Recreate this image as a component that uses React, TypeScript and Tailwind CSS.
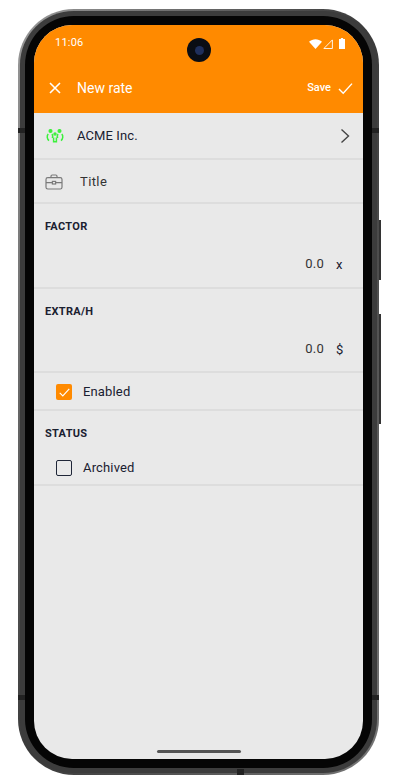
import React from 'react';

const font = { fontFamily: 'Roboto, sans-serif' };

const CloseIcon = () => (
  <svg width={14} height={14} viewBox="0 0 14 14" fill="none">
    <path d="M2 2l10 10M12 2L2 12" stroke="#fff" strokeWidth={1.6} />
  </svg>
);

const CheckIcon = ({ w = 15, sw = 1.4 }: { w?: number; sw?: number }) => (
  <svg width={w} height={w} viewBox="0 0 15 15" fill="none">
    <path d="M1 8l4.2 4.2L14 2.6" stroke="#fff" strokeWidth={sw} />
  </svg>
);

const PeopleIcon = () => (
  <svg width={18} height={14} viewBox="0 0 18 14" fill="none" stroke="#3cf03c" strokeWidth={1.5}>
    <circle cx={4.5} cy={2} r={1.3} fill="#3cf03c" />
    <circle cx={13.5} cy={2} r={1.3} fill="#3cf03c" />
    <circle cx={9} cy={5} r={1} />
    <path d="M2.2 5c-1.6 2-1.2 5 .8 6.6M6 5c1 1.4.9 2.6.3 4M15.8 5c1.6 2 1.2 5-.8 6.6M12 5c-1 1.4-.9 2.6-.3 4M7.6 8.4v4.4h2.8V8.4" />
  </svg>
);

const BriefcaseIcon = () => (
  <svg width={18} height={16} viewBox="0 0 18 16" fill="none" stroke="#7a7a7a" strokeWidth={1.2}>
    <rect x={1} y={3.6} width={16} height={11.4} rx={1.8} />
    <path d="M6 3.6V2.2C6 1.5 6.5 1 7.2 1h3.6c.7 0 1.2.5 1.2 1.2v1.4M1 8.6h6M11 8.6h6" />
    <rect x={7.4} y={7.4} width={3.2} height={2.6} />
  </svg>
);

const Chevron = () => (
  <svg width={10} height={16} viewBox="0 0 10 16" fill="none">
    <path d="M1.5 1.5L8.5 8l-7 6.5" stroke="#444" strokeWidth={1.4} />
  </svg>
);

const StatusIcons = () => (
  <div className="flex items-center">
    <svg width={13} height={10} viewBox="0 0 13 10">
      <path d="M0 2.8C3.6-.6 9.4-.6 13 2.8L6.5 10z" fill="#fff" />
    </svg>
    <svg width={10} height={10} viewBox="0 0 10 10" fill="none" className="ml-[1px]">
      <path d="M9.4.9v8.6H.9z" stroke="#fff" strokeWidth={0.9} />
    </svg>
    <svg width={6} height={11} viewBox="0 0 7 11" preserveAspectRatio="none" className="ml-[6px]">
      <path d="M2.2 0h2.6v1H7v10H0V1h2.2z" fill="#fff" />
    </svg>
  </div>
);

function SectionLabel({ children }: { children: string }) {
  return <div className="text-[11px] font-bold tracking-[0.3px] leading-none text-[#1a2030]">{children}</div>;
}

function NumberField({ label, unit, height }: { label: string; unit: string; height: string }) {
  return (
    <div className={`${height} border-b-2 border-[#dddddd] px-[11px] pt-[17px]`}>
      <SectionLabel>{label}</SectionLabel>
      <div className="flex justify-end items-center mt-[24px] h-[16px] text-[#333] text-[13px] tracking-[0.2px]">
        <span>0.0</span>
        <span className="w-[20px] ml-[8px] pl-[4px] mt-[2px] text-[13px] text-[#1a2030]">{unit}</span>
      </div>
    </div>
  );
}

export default function App() {
  return (
    <div className="w-[400px] h-[784px] bg-white overflow-hidden pl-[18px] pt-[9px]" style={font}>
      <div className="relative w-[361px] h-[766px] rounded-[56px] bg-gradient-to-br from-[#9a9a9a] via-[#3a3a3a] to-[#777] p-[2px]">
        {/* side buttons */}
        <div className="absolute right-[-2px] top-[211px] w-[2px] h-[60px] bg-[#333]" />
        <div className="absolute right-[-2px] top-[305px] w-[2px] h-[110px] bg-[#333]" />
        {/* antenna bands */}
        <div className="absolute left-0 top-[119px] w-[7px] h-[5px] bg-[#222]" />
        <div className="absolute right-0 top-[119px] w-[7px] h-[5px] bg-[#222]" />
        <div className="absolute left-0 top-[686px] w-[7px] h-[5px] bg-[#222]" />
        <div className="absolute right-0 top-[686px] w-[7px] h-[5px] bg-[#222]" />
        <div className="absolute left-[219px] bottom-0 w-[7px] h-[6px] bg-[#222]" />

        <div className="w-full h-full rounded-[54px] bg-[#3c3c3c] p-[5px]">
          <div className="w-full h-full rounded-[49px] bg-[#050505] p-[9px]">
            <div className="relative w-[329px] h-[734px] rounded-[38px] bg-[#e9e9e9] overflow-hidden text-[#1a2030]">
              {/* header */}
              <div className="h-[88px] bg-[#ff8a00] text-white">
                <div className="flex items-center justify-between h-[37px] pl-[21px] pr-[18px]">
                  <span className="text-[11px] tracking-[0.2px]">11:06</span>
                  <StatusIcons />
                </div>
                <div className="flex items-center h-[52px] pl-[14px] pr-[10px]">
                  <CloseIcon />
                  <span className="ml-[15px] text-[14px]">New rate</span>
                  <span className="ml-auto text-[11px] font-medium">Save</span>
                  <span className="ml-[7px]">
                    <CheckIcon />
                  </span>
                </div>
              </div>
              {/* camera */}
              <div className="absolute left-[153px] top-[13px] w-[24px] h-[24px] rounded-full bg-[#0a0d14] flex items-center justify-center">
                <div className="w-[9px] h-[9px] rounded-full bg-[#1f2f5c]" />
              </div>

              {/* rows */}
              <div className="flex items-center h-[47px] border-b-2 border-[#dddddd] pt-[1px] pl-[12px] pr-[13px]">
                <PeopleIcon />
                <span className="ml-[13px] text-[13px] tracking-[0.1px]">ACME Inc.</span>
                <span className="ml-auto">
                  <Chevron />
                </span>
              </div>
              <div className="flex items-center h-[44px] border-b-2 border-[#dddddd] pt-[2px] pl-[11px]">
                <BriefcaseIcon />
                <span className="ml-[17px] text-[13px] tracking-[0.4px] text-[#333]">Title</span>
              </div>
              <NumberField label="FACTOR" unit="x" height="h-[85px]" />
              <NumberField label="EXTRA/H" unit="$" height="h-[84px]" />
              <div className="flex items-center h-[38px] border-b-2 border-[#dddddd] pt-[2px] pl-[22px]">
                <div className="w-[16px] h-[16px] rounded-[2px] bg-[#ff8a00] flex items-center justify-center">
                  <CheckIcon w={11} sw={1.6} />
                </div>
                <span className="ml-[11px] text-[13px] tracking-[0.15px]">Enabled</span>
              </div>
              <div className="h-[75px] border-b-2 border-[#dddddd] pt-[17px]">
                <div className="px-[11px]">
                  <SectionLabel>STATUS</SectionLabel>
                </div>
                <div className="flex items-center mt-[19px] pl-[22px]">
                  <div className="w-[16px] h-[16px] rounded-[2px] border-[1.5px] border-[#1f2638]" />
                  <span className="ml-[11px] text-[13px] tracking-[0.15px]">Archived</span>
                </div>
              </div>

              {/* home bar */}
              <div className="absolute left-[123px] bottom-[6px] w-[84px] h-[3px] rounded-full bg-[#555]" />
            </div>
          </div>
        </div>
      </div>
    </div>
  );
}
